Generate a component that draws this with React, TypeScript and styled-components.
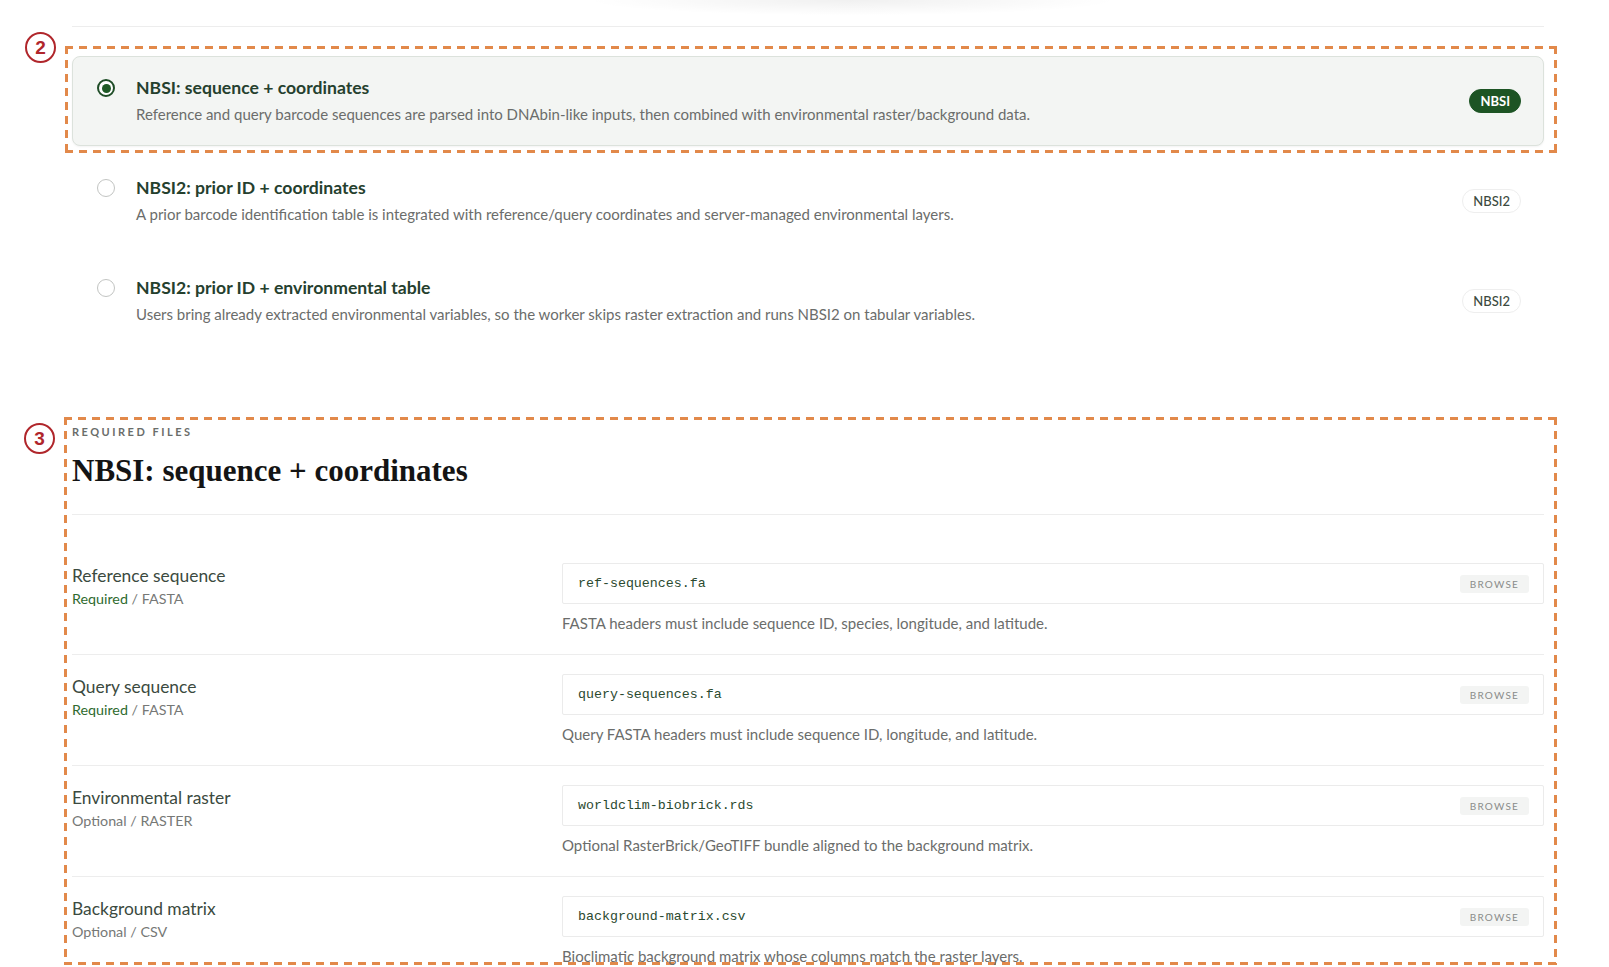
import styled, { createGlobalStyle } from "styled-components";

const GlobalStyle = createGlobalStyle`
  html, body {
    margin: 0;
    padding: 0;
    background: #ffffff;
    overflow: hidden;
  }
  body {
    font-family: Lato, "Noto Sans", sans-serif;
    color: #333;
  }
`;

const dash = "#e2894a";

const Page = styled.div`
  width: 1609px;
  height: 967px;
  overflow: hidden;
  box-sizing: border-box;
  padding: 0 65px 0 72px;
`;

const TopRule = styled.div`
  height: 26px;
  border-bottom: 1px solid #ededed;
  background: radial-gradient(ellipse 380px 22px at 780px 0, rgba(0, 0, 0, 0.06), transparent 70%);
`;

// dashed callout frame drawn with background gradients
const Callout = styled.div<{ $top: number; $left: number; $height?: number }>`
  position: relative;
  box-sizing: border-box;
  margin: ${(p) => p.$top}px -13px 0 -${(p) => p.$left}px;
  padding: 10px 13px 7px ${(p) => p.$left}px;
  ${(p) => (p.$height ? `height: ${p.$height}px;` : "")}
  background:
    linear-gradient(90deg, ${dash} 60%, transparent 0) top left / 14px 3px repeat-x,
    linear-gradient(90deg, ${dash} 60%, transparent 0) bottom left / 14px 3px repeat-x,
    linear-gradient(180deg, ${dash} 60%, transparent 0) top left / 3px 14px repeat-y,
    linear-gradient(180deg, ${dash} 60%, transparent 0) top right / 3px 14px repeat-y;
`;

const StepMark = styled.span<{ $offset: number }>`
  position: absolute;
  left: -40px;
  top: ${(p) => p.$offset}px;
  width: 27px;
  height: 27px;
  border: 2px solid #b0262b;
  border-radius: 50%;
  display: flex;
  align-items: center;
  justify-content: center;
  font-family: "Liberation Sans", Arial, sans-serif;
  font-weight: 700;
  font-size: 19px;
  color: #b0262b;
  background: #fff;
`;

const OptionList = styled.div`
  display: flex;
  flex-direction: column;
  gap: 10px;
`;

const OptionCard = styled.div<{ $active?: boolean }>`
  display: grid;
  grid-template-columns: 18px 1fr auto;
  column-gap: 21px;
  align-items: start;
  height: 90px;
  box-sizing: border-box;
  padding: 20px 22px 0 24px;
  border: 1px solid ${(p) => (p.$active ? "#dce2dc" : "transparent")};
  border-radius: 8px;
  background: ${(p) => (p.$active ? "#f3f5f3" : "transparent")};
  box-shadow: ${(p) => (p.$active ? "0 1px 2px rgba(0, 0, 0, 0.05)" : "none")};
`;

const Radio = styled.span<{ $checked?: boolean }>`
  width: 18px;
  height: 18px;
  margin-top: 2px;
  box-sizing: border-box;
  border-radius: 50%;
  border: ${(p) => (p.$checked ? "2px solid #1f4d27" : "1.5px solid #c2c4c2")};
  display: flex;
  align-items: center;
  justify-content: center;
  background: #fff;

  &::after {
    content: "";
    width: 9px;
    height: 9px;
    border-radius: 50%;
    background: ${(p) => (p.$checked ? "#1f5a26" : "transparent")};
  }
`;

const OptionText = styled.div`
  display: flex;
  flex-direction: column;
  gap: 5px;
`;

const OptionTitle = styled.div`
  font-size: 17.6px;
  line-height: 22px;
  font-weight: 700;
  color: #25402e;
`;

const OptionDesc = styled.div`
  font-size: 15px;
  line-height: 20px;
  color: #6b6d6b;
`;

const Badge = styled.span<{ $solid?: boolean }>`
  align-self: center;
  margin-top: -20px;
  height: 24px;
  box-sizing: border-box;
  padding: 0 10px;
  display: flex;
  align-items: center;
  border-radius: 12px;
  font-size: 13px;
  font-weight: ${(p) => (p.$solid ? 700 : 500)};
  color: ${(p) => (p.$solid ? "#ffffff" : "#3c4a40")};
  background: ${(p) => (p.$solid ? "#1d5424" : "#ffffff")};
  border: 1px solid ${(p) => (p.$solid ? "#1d5424" : "#eeeeee")};
`;

const Eyebrow = styled.div`
  font-size: 11px;
  line-height: 14px;
  font-weight: 700;
  letter-spacing: 2.5px;
  color: #6a6d6a;
  margin-top: -2px;
`;

const Heading = styled.h2`
  margin: 14px 0 0;
  padding-bottom: 25px;
  border-bottom: 1px solid #ededed;
  font-family: "Liberation Serif", "Times New Roman", serif;
  font-size: 31px;
  line-height: 36px;
  font-weight: 700;
  color: #141414;
`;

const FileList = styled.div`
  margin-top: 29px;
  display: flex;
  flex-direction: column;
`;

const FileRow = styled.div`
  display: grid;
  grid-template-columns: 490px 1fr;
  padding: 19px 0 21px;
  border-bottom: 1px solid #ededed;
`;

const FieldLabel = styled.div`
  padding-top: 1px;
  display: flex;
  flex-direction: column;
  gap: 2px;
`;

const FieldName = styled.div`
  font-size: 17.4px;
  line-height: 23px;
  color: #3b4a40;
`;

const FieldMeta = styled.div`
  font-size: 14.3px;
  line-height: 20px;
  color: #767876;
`;

const Requirement = styled.span<{ $required?: boolean }>`
  color: ${(p) => (p.$required ? "#2f6b2f" : "#767876")};
`;

const FileBox = styled.div`
  height: 41px;
  box-sizing: border-box;
  display: flex;
  align-items: center;
  justify-content: space-between;
  padding: 0 14px 0 15px;
  border: 1px solid #ebebeb;
  border-radius: 2px;
  background: #fff;
`;

const FileName = styled.span`
  font-family: "Liberation Mono", "DejaVu Sans Mono", monospace;
  font-size: 13.3px;
  color: #2b4a2f;
`;

const BrowseButton = styled.button`
  height: 18px;
  padding: 0 10px;
  border: none;
  border-radius: 3px;
  background: #f3f4f3;
  font-family: Lato, "Noto Sans", sans-serif;
  font-size: 10px;
  letter-spacing: 1.2px;
  color: #8a8c8a;
`;

const FileHint = styled.div`
  margin-top: 9px;
  font-size: 15px;
  line-height: 20px;
  color: #6b6d6b;
`;

const options = [
  {
    title: "NBSI: sequence + coordinates",
    desc: "Reference and query barcode sequences are parsed into DNAbin-like inputs, then combined with environmental raster/background data.",
    badge: "NBSI",
  },
  {
    title: "NBSI2: prior ID + coordinates",
    desc: "A prior barcode identification table is integrated with reference/query coordinates and server-managed environmental layers.",
    badge: "NBSI2",
  },
  {
    title: "NBSI2: prior ID + environmental table",
    desc: "Users bring already extracted environmental variables, so the worker skips raster extraction and runs NBSI2 on tabular variables.",
    badge: "NBSI2",
  },
];

const files = [
  {
    name: "Reference sequence",
    required: true,
    kind: "FASTA",
    file: "ref-sequences.fa",
    hint: "FASTA headers must include sequence ID, species, longitude, and latitude.",
  },
  {
    name: "Query sequence",
    required: true,
    kind: "FASTA",
    file: "query-sequences.fa",
    hint: "Query FASTA headers must include sequence ID, longitude, and latitude.",
  },
  {
    name: "Environmental raster",
    required: false,
    kind: "RASTER",
    file: "worldclim-biobrick.rds",
    hint: "Optional RasterBrick/GeoTIFF bundle aligned to the background matrix.",
  },
  {
    name: "Background matrix",
    required: false,
    kind: "CSV",
    file: "background-matrix.csv",
    hint: "Bioclimatic background matrix whose columns match the raster layers.",
  },
];

type Option = (typeof options)[number];

const OptionItem = ({ option, active }: { option: Option; active?: boolean }) => (
  <OptionCard $active={active}>
    <Radio $checked={active} />
    <OptionText>
      <OptionTitle>{option.title}</OptionTitle>
      <OptionDesc>{option.desc}</OptionDesc>
    </OptionText>
    <Badge $solid={active}>{option.badge}</Badge>
  </OptionCard>
);

const App = () => {
  const [first, ...rest] = options;
  return (
    <>
      <GlobalStyle />
      <Page>
        <TopRule />
        <Callout $top={19} $left={7}>
          <StepMark $offset={-14}>2</StepMark>
          <OptionItem option={first} active />
        </Callout>
        <OptionList style={{ marginTop: 3 }}>
          {rest.map((o) => (
            <OptionItem key={o.title} option={o} />
          ))}
        </OptionList>
        <Callout $top={71} $left={8} $height={548}>
          <StepMark $offset={6}>3</StepMark>
          <Eyebrow>REQUIRED FILES</Eyebrow>
          <Heading>NBSI: sequence + coordinates</Heading>
          <FileList>
            {files.map((f) => (
              <FileRow key={f.name}>
                <FieldLabel>
                  <FieldName>{f.name}</FieldName>
                  <FieldMeta>
                    <Requirement $required={f.required}>
                      {f.required ? "Required" : "Optional"}
                    </Requirement>
                    {" / "}
                    {f.kind}
                  </FieldMeta>
                </FieldLabel>
                <div>
                  <FileBox>
                    <FileName>{f.file}</FileName>
                    <BrowseButton>BROWSE</BrowseButton>
                  </FileBox>
                  <FileHint>{f.hint}</FileHint>
                </div>
              </FileRow>
            ))}
          </FileList>
        </Callout>
      </Page>
    </>
  );
};

export default App;
